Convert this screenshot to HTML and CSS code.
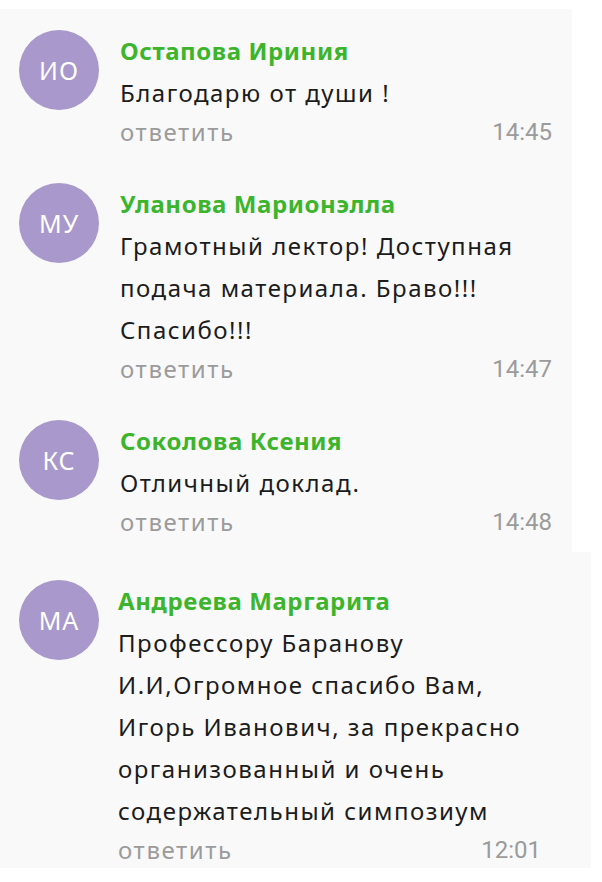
FILE: index.html
```html
<!DOCTYPE html>
<html lang="ru">
<head>
    <meta charset="UTF-8">
    <meta name="viewport" content="width=device-width, initial-scale=1.0">
    <title>Комментарии</title>
    <link rel="stylesheet" href="styles.css">
</head>
<body>
    <div class="comments">
        <div class="comment">
            <div class="avatar">ИО</div>
            <div class="comment-body">
                <div class="author">Остапова Ириния</div>
                <div class="text">Благодарю от души !</div>
                <div class="meta">
                    <span class="reply">ответить</span>
                    <span class="time">14:45</span>
                </div>
            </div>
        </div>

        <div class="comment">
            <div class="avatar">МУ</div>
            <div class="comment-body">
                <div class="author">Уланова Марионэлла</div>
                <div class="text">Грамотный лектор! Доступная подача материала. Браво!!! Спасибо!!!</div>
                <div class="meta">
                    <span class="reply">ответить</span>
                    <span class="time">14:47</span>
                </div>
            </div>
        </div>

        <div class="comment">
            <div class="avatar">КС</div>
            <div class="comment-body">
                <div class="author">Соколова Ксения</div>
                <div class="text">Отличный доклад.</div>
                <div class="meta">
                    <span class="reply">ответить</span>
                    <span class="time">14:48</span>
                </div>
            </div>
        </div>

        <div class="comment comment-last">
            <div class="avatar">МА</div>
            <div class="comment-body">
                <div class="author">Андреева Маргарита</div>
                <div class="text">Профессору Баранову И.И,Огромное спасибо Вам, Игорь Иванович, за прекрасно организованный и очень содержательный симпозиум</div>
                <div class="meta">
                    <span class="reply">ответить</span>
                    <span class="time">12:01</span>
                </div>
            </div>
        </div>
    </div>
</body>
</html>
```

FILE: styles.css
```css
body {
    margin: 0;
    background: #ffffff;
    font-family: "Noto Sans", Roboto, sans-serif;
    color: #1c1c1c;
}

.comments {
    padding-top: 9px;
}

.comment {
    display: flex;
    width: 572px;
    box-sizing: border-box;
    padding: 21px 20px 12px 19px;
    background: #f9f9f9;
}

.avatar {
    flex: none;
    width: 80px;
    height: 80px;
    border-radius: 50%;
    background: #a998cb;
    color: #ffffff;
    font-size: 25px;
    letter-spacing: 1px;
    display: flex;
    align-items: center;
    justify-content: center;
}

.comment-body {
    flex: 1;
    margin-left: 21px;
    font-size: 24px;
}

.author {
    color: #3cb52c;
    font-weight: bold;
    line-height: 42px;
    letter-spacing: 0.6px;
}

.text {
    line-height: 42px;
    letter-spacing: 1.5px;
}

.meta {
    display: flex;
    justify-content: space-between;
    line-height: 36px;
    color: #9b9b9b;
}

.reply {
    letter-spacing: 1.6px;
}

.time {
    font-family: Roboto, sans-serif;
}

/* last block comes from another capture: wider card, slightly shifted */
.comment-last {
    width: 591px;
    padding: 28px 50px 0 19px;
}

.comment-last .comment-body {
    margin-left: 19px;
}
```
